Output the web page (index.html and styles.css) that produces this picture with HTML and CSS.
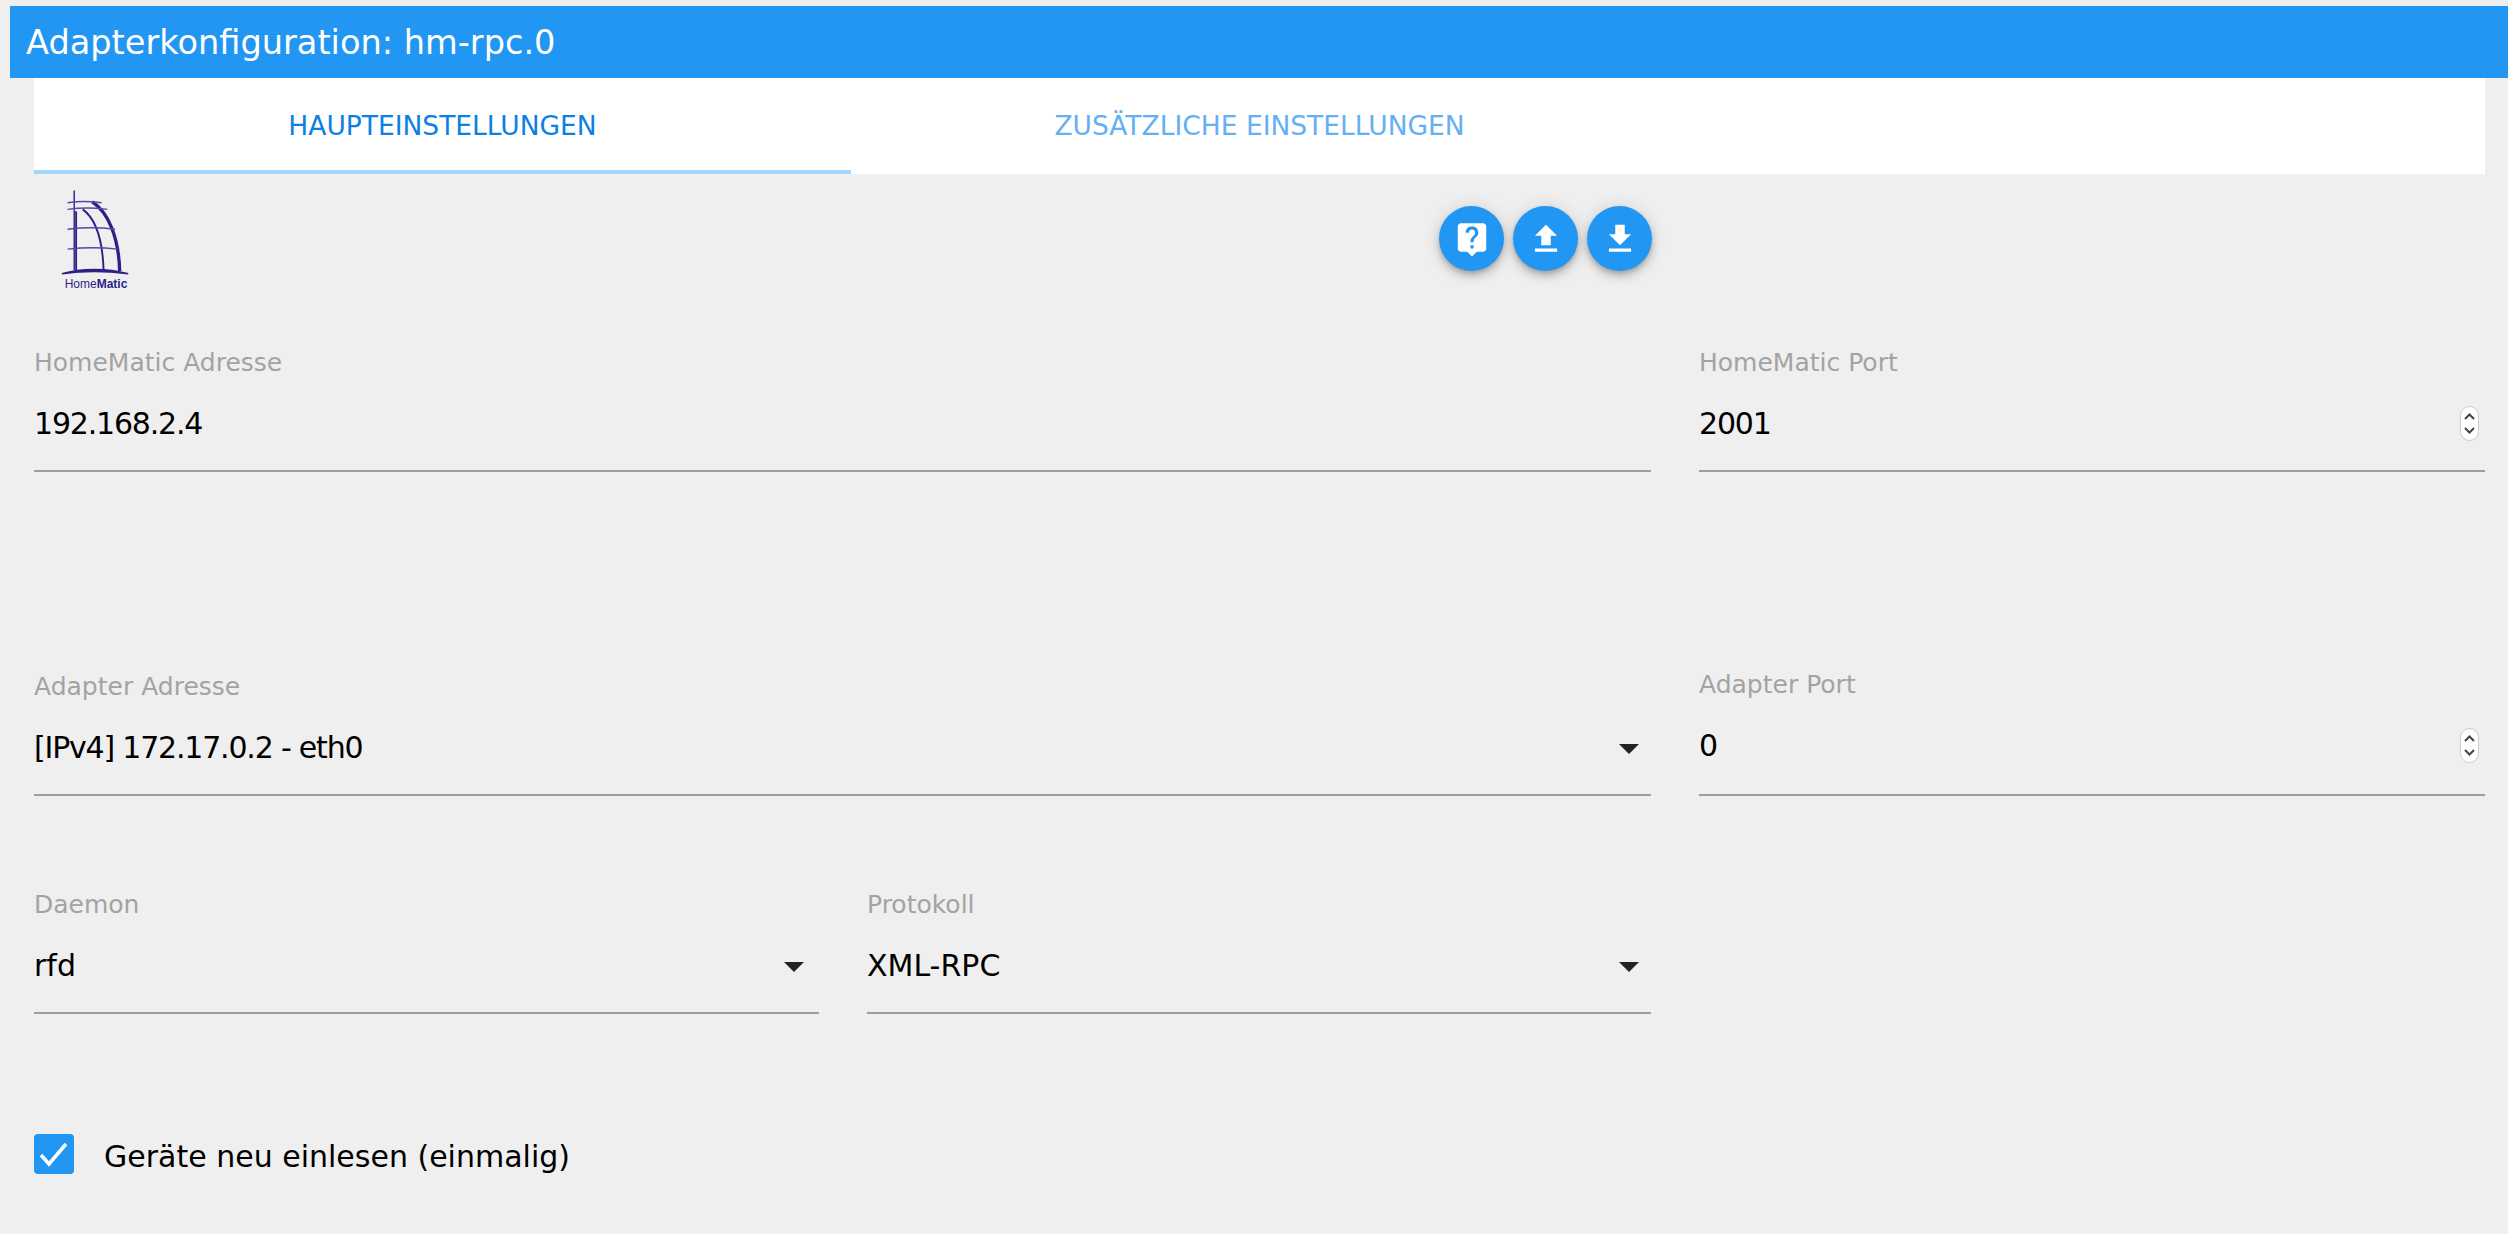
FILE: index.html
```html
<html>
<head>
<meta charset="utf-8">
<title>Adapterkonfiguration: hm-rpc.0</title>
<link rel="stylesheet" href="styles.css">
</head>
<body>
	<div class="titlebar">Adapterkonfiguration: hm-rpc.0</div>
	<div class="main">
		<div class="tabs">
			<div class="tab active">Haupteinstellungen</div>
			<div class="tab">Zusätzliche Einstellungen</div>
		</div>

		<div class="grid toolbar">
			<div class="toolbar_inner">
				<div class="logo">
					<svg class="logo_mark" viewBox="0 0 76 92">
						<path d="M15 0V84" stroke="#2e1f86" stroke-width="1.5" fill="none"/>
						<path d="M17 22V84" stroke="#2e1f86" stroke-width="2" fill="none"/>
						<path d="M34 12C50 22 62 48 63 85" stroke="#2e1f86" stroke-width="3.500" fill="none"/>
						<path d="M24 20C38 30 45 54 46 84" stroke="#2e1f86" stroke-width="2" fill="none"/>
						<g stroke="#5548a4" stroke-width="1.500" fill="none">
							<path d="M8 13C20 11 30 11 44 13"/>
							<path d="M8 20C22 18 36 18 50 20"/>
							<path d="M8 41C24 39 42 39 58 41"/>
							<path d="M8 62C26 60 44 60 61 62"/>
						</g>
						<path d="M2 88C22 82 50 82 72 88C50 85 22 85 2 88Z" stroke="#2e1f86" stroke-width="1.500" fill="#2e1f86"/>
					</svg>
					<div class="logo_text">Home<b>Matic</b></div>
				</div>
				<div class="fabs">
					<div class="fab">
						<svg viewBox="0 0 24 24" class="fab_icon"><path fill="#fff" d="M19 2H5C3.900 2 3 2.900 3 4v14c0 1.100.9 2 2 2h4l3 3 3-3h4c1.100 0 2-.9 2-2V4c0-1.100-.9-2-2-2zm-6 16h-2v-2h2v2zm2.070-7.750-.9.920C13.450 11.900 13 12.500 13 14h-2v-.5c0-1.100.45-2.100 1.170-2.830l1.240-1.260c.37-.36.59-.86.59-1.410 0-1.100-.9-2-2-2s-2 .9-2 2H8c0-2.210 1.790-4 4-4s4 1.790 4 4c0 .88-.36 1.680-.93 2.250z"/></svg>
					</div>
					<div class="fab">
						<svg viewBox="0 0 24 24" class="fab_icon"><path fill="#fff" d="M9 16h6v-6h4l-7-7-7 7h4zm-4 2h14v2H5z"/></svg>
					</div>
					<div class="fab">
						<svg viewBox="0 0 24 24" class="fab_icon"><path fill="#fff" d="M19 9h-4V3H9v6H5l7 7 7-7zM5 18v2h14v-2H5z"/></svg>
					</div>
				</div>
			</div>
		</div>

		<div class="grid row_first">
			<div class="field">
				<div class="label">HomeMatic Adresse</div>
				<div class="value num">192.168.2.4</div>
			</div>
			<div class="field">
				<div class="label">HomeMatic Port</div>
				<div class="value num">2001
					<svg class="spinner" viewBox="0 0 19 35">
						<rect x="0.5" y="0.5" width="18" height="34" rx="9" fill="#fff" stroke="#ccc"/>
						<path d="M5 13l4.500-4.500 4.500 4.500M5 22l4.500 4.500 4.500-4.500" stroke="#444" stroke-width="2" fill="none"/>
					</svg>
				</div>
			</div>
		</div>

		<div class="grid row_second">
			<div class="field">
				<div class="label">Adapter Adresse</div>
				<div class="value num">[IPv4] 172.17.0.2 - eth0<span class="arrow"></span></div>
			</div>
			<div class="field">
				<div class="label label_high">Adapter Port</div>
				<div class="value num">0
					<svg class="spinner" viewBox="0 0 19 35">
						<rect x="0.5" y="0.5" width="18" height="34" rx="9" fill="#fff" stroke="#ccc"/>
						<path d="M5 13l4.500-4.500 4.500 4.500M5 22l4.500 4.500 4.500-4.500" stroke="#444" stroke-width="2" fill="none"/>
					</svg>
				</div>
			</div>
		</div>

		<div class="grid row_third">
			<div class="half">
				<div class="field">
					<div class="label">Daemon</div>
					<div class="value">rfd<span class="arrow"></span></div>
				</div>
				<div class="field">
					<div class="label">Protokoll</div>
					<div class="value">XML-RPC<span class="arrow"></span></div>
				</div>
			</div>
		</div>

		<div class="check_row">
			<span class="checkbox">
				<svg viewBox="0 0 40 40"><path d="M7 21l8 9 17-20" stroke="#fff" stroke-width="3.500" fill="none"/></svg>
			</span>
			<span class="check_label">Geräte neu einlesen (einmalig)</span>
		</div>
	</div>
</body>
</html>
```

FILE: styles.css
```css
body {
	margin: 0;
	padding: 6px 0 0 10px;
	background: #efefef;
	color: #000;
	font-family: "DejaVu Sans", sans-serif;
	height: 1228px;
	overflow: hidden;
}

.titlebar {
	background: #2196f3;
	color: #fff;
	height: 72px;
	line-height: 74px;
	padding-left: 16px;
	font-size: 33.6px;
}

.main {
	padding: 0 23px 0 24px;
}

.tabs {
	display: flex;
	background: #fff;
	height: 96px;
}

.tab {
	width: 817px;
	text-align: center;
	line-height: 96px;
	font-size: 26.5px;
	text-transform: uppercase;
	color: #64b0f2;
}

.tab.active {
	color: #0d80e4;
	border-bottom: 4px solid #a6d5fa;
	height: 92px;
}

.grid {
	display: grid;
	grid-template-columns: 1617px 786px;
	column-gap: 48px;
}

.toolbar {
	height: 171px;
}

.toolbar_inner {
	display: flex;
	justify-content: space-between;
	align-items: flex-start;
}

.logo {
	margin: 16px 0 0 26px;
	color: #2e1f86;
	width: 72px;
}

.logo_mark {
	display: block;
	width: 72px;
	height: 88px;
}

.logo_text {
	font-family: "Liberation Sans", sans-serif;
	font-size: 12px;
	line-height: 12px;
	text-align: center;
}

.fabs {
	display: flex;
	gap: 9px;
	margin: 32px -1px 0 0;
}

.fab {
	width: 65px;
	height: 65px;
	border-radius: 50%;
	background: #2196f3;
	box-shadow: 0 3px 5px -1px rgba(0,0,0,0.2), 0 6px 10px 0 rgba(0,0,0,0.14), 0 1px 18px 0 rgba(0,0,0,0.12);
	display: flex;
	align-items: center;
	justify-content: center;
}

.fab_icon {
	width: 38px;
	height: 38px;
}

.field {
	height: 124px;
	border-bottom: 2px solid #9e9e9e;
	position: relative;
}

.label {
	color: #a3a3a3;
	font-size: 25px;
	line-height: 30px;
	padding-top: 2px;
}

.label_high {
	padding-top: 0;
	margin-bottom: 2px;
}

.value {
	margin-top: 21px;
	font-size: 30px;
	line-height: 50px;
	position: relative;
}

.value.num {
	letter-spacing: -1.2px;
}

.row_first {
	margin-top: 1px;
}

.row_second {
	margin-top: 198px;
}

.row_third {
	margin-top: 92px;
}

.half {
	display: grid;
	grid-template-columns: 785px 784px;
	column-gap: 48px;
}

.spinner {
	position: absolute;
	right: 6px;
	top: 7px;
	width: 19px;
	height: 35px;
}

.arrow {
	position: absolute;
	right: 12px;
	top: 21px;
	border-left: 10px solid transparent;
	border-right: 10px solid transparent;
	border-top: 10px solid #222;
}

.half .field:first-child .arrow {
	right: 15px;
}

.check_row {
	display: flex;
	align-items: flex-start;
	margin-top: 120px;
}

.checkbox {
	width: 40px;
	height: 40px;
	border-radius: 4px;
	background: #2196f3;
}

.checkbox svg {
	display: block;
}

.check_label {
	margin: 3px 0 0 30px;
	font-size: 30px;
	line-height: 40px;
}
```
